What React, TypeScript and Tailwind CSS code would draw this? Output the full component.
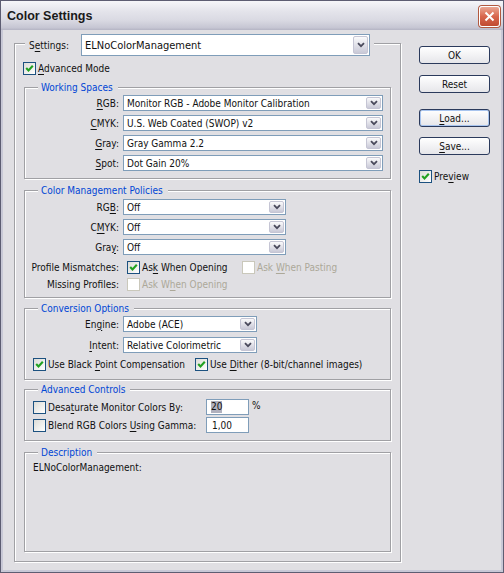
import React from 'react'

type Kids = { children?: React.ReactNode }

// underlined access key letter
function K({ children }: Kids) {
  return <span className="underline decoration-1 underline-offset-[2px]">{children}</span>
}

function Chevron() {
  return (
    <svg width="8" height="6" viewBox="0 0 8 6">
      <path d="M1 1.2 L4 4.2 L7 1.2" stroke="#4a4a5c" strokeWidth="1.8" fill="none" />
    </svg>
  )
}

function Select({ value, className }: { value: string; className: string }) {
  return (
    <div className={`flex border border-[#7f9db9] bg-white ${className}`}>
      <span className="flex flex-1 items-center truncate pl-[3px]">{value}</span>
      <span className="m-px flex w-[15px] items-center justify-center rounded-[2px] border border-[#c5c5d4] bg-gradient-to-b from-[#fafafb] to-[#c9c9d7]">
        <Chevron />
      </span>
    </div>
  )
}

function Check({ checked, disabled }: { checked?: boolean; disabled?: boolean }) {
  return (
    <span
      className={
        disabled
          ? 'flex h-[13px] w-[13px] shrink-0 border border-[#cac8bb] bg-white'
          : 'flex h-[13px] w-[13px] shrink-0 items-center justify-center border border-[#1c5180] bg-gradient-to-br from-[#dcdcd7] to-white'
      }
    >
      {checked && (
        <svg width="9" height="9" viewBox="0 0 9 9">
          <path d="M1.2 4 L3.5 6.4 L7.8 1.8" stroke="#21a121" strokeWidth="2.1" fill="none" />
        </svg>
      )}
    </span>
  )
}

function Group({ title, className, children }: Kids & { title: string; className: string }) {
  return (
    <div className={`flex flex-col border border-[#a0a0a4] shadow-[inset_1px_1px_0_#fff,1px_1px_0_#fff] ${className}`}>
      <div className="-mt-[7px] ml-[13px] self-start bg-[#e0dfe3] pl-[3px] pr-[5px] leading-[13px] text-[#0046d5]">
        {title}
      </div>
      {children}
    </div>
  )
}

function Row({ label, children, className = '' }: Kids & { label: React.ReactNode; className?: string }) {
  return (
    <div className={`flex h-[16px] items-center ${className}`}>
      <span className="w-[94px] text-right">{label}</span>
      {children}
    </div>
  )
}

function Button({ children, focused }: Kids & { focused?: boolean }) {
  return (
    <div
      className={
        focused
          ? 'flex h-[18px] w-[71px] items-center justify-center rounded-[3px] border border-[#2b3a5c] bg-gradient-to-b from-white to-[#e6e6ea] shadow-[inset_0_0_0_1px_#a8c4ee]'
          : 'flex h-[18px] w-[71px] items-center justify-center rounded-[3px] border border-[#2b3a5c] bg-gradient-to-b from-white to-[#e6e6ea]'
      }
    >
      {children}
    </div>
  )
}

export default function App() {
  return (
    <div className="h-[573px] w-[504px] overflow-hidden font-['DejaVu_Sans_Condensed','DejaVu_Sans',sans-serif] text-[10px] leading-[13px] text-[#111]">
      <div className="flex h-full flex-col border border-[#5d5d72] bg-[#e0dfe3]">
        {/* title bar */}
        <div className="flex h-[29px] shrink-0 items-center justify-between bg-[linear-gradient(to_bottom,#f6f6f9_0%,#e4e4eb_35%,#dadae3_65%,#c6c6d3_92%,#b4b4c4_100%)] pl-[6px] pr-[3px] pt-[2px]">
          <span className="font-['Liberation_Sans',sans-serif] text-[12.5px] font-bold text-[#1a1a1a]">Color Settings</span>
          <span className="flex h-[21px] w-[21px] items-center justify-center rounded-[3px] border border-white bg-gradient-to-b from-[#e9a592] via-[#d8664d] to-[#c04a30] shadow-[0_0_0_1px_#b2593f]">
            <svg width="11" height="11" viewBox="0 0 11 11">
              <path d="M1.5 1.5 L9.5 9.5 M9.5 1.5 L1.5 9.5" stroke="#fff" strokeWidth="2" />
            </svg>
          </span>
        </div>

        <div className="flex flex-1 border-x-2 border-b-2 border-[#c8c8d6] pl-[11px]">
          {/* main group */}
          <div className="mt-[13px] flex h-[519px] w-[387px] flex-col border border-[#a0a0a4] pb-[9px] shadow-[inset_1px_1px_0_#fff,1px_1px_0_#fff]">
            <div className="-mt-[10px] ml-[10px] flex items-center self-start bg-[#e0dfe3] px-[4px]">
              <span className="w-[52px]">
                S<K>e</K>ttings:
              </span>
              <Select value="ELNoColorManagement" className="h-[22px] w-[289px] text-[11px]" />
            </div>

            <div className="ml-[8px] mt-[6px] flex h-[13px] items-center gap-[2px]">
              <Check checked />
              <span>
                <K>A</K>dvanced Mode
              </span>
            </div>

            <Group title="Working Spaces" className="ml-[9px] mt-[12px] w-[367px] pb-[7px]">
              <div className="mt-[1px] flex flex-col gap-[4px]">
                <Row label={<><K>R</K>GB:</>}>
                  <Select value="Monitor RGB - Adobe Monitor Calibration" className="ml-[4px] h-[16px] w-[260px]" />
                </Row>
                <Row label={<><K>C</K>MYK:</>}>
                  <Select value="U.S. Web Coated (SWOP) v2" className="ml-[4px] h-[16px] w-[260px]" />
                </Row>
                <Row label={<><K>G</K>ray:</>}>
                  <Select value="Gray Gamma 2.2" className="ml-[4px] h-[16px] w-[260px]" />
                </Row>
                <Row label={<><K>S</K>pot:</>}>
                  <Select value="Dot Gain 20%" className="ml-[4px] h-[16px] w-[260px]" />
                </Row>
              </div>
            </Group>

            <Group title="Color Management Policies" className="ml-[9px] mt-[11px] w-[367px] pb-[6px]">
              <div className="mt-[2px] flex flex-col gap-[4px]">
                <Row label={<>RG<K>B</K>:</>}>
                  <Select value="Off" className="ml-[4px] h-[16px] w-[163px]" />
                </Row>
                <Row label={<>C<K>M</K>YK:</>}>
                  <Select value="Off" className="ml-[4px] h-[16px] w-[163px]" />
                </Row>
                <Row label={<>Gra<K>y</K>:</>}>
                  <Select value="Off" className="ml-[4px] h-[16px] w-[163px]" />
                </Row>
              </div>
              <div className="mt-[6px] flex h-[13px] items-center">
                <span className="w-[94px] text-right">Profile Mismatches:</span>
                <div className="ml-[8px] flex w-[115px] items-center gap-[2px]">
                  <Check checked />
                  <span>
                    As<K>k</K> When Opening
                  </span>
                </div>
                <div className="flex items-center gap-[2px] text-[#aca899]">
                  <Check disabled />
                  <span>
                    Ask <K>W</K>hen Pasting
                  </span>
                </div>
              </div>
              <div className="mt-[4px] flex h-[13px] items-center">
                <span className="w-[94px] text-right">Missing Profiles:</span>
                <div className="ml-[8px] flex items-center gap-[2px] text-[#aca899]">
                  <Check disabled />
                  <span>
                    Ask W<K>h</K>en Opening
                  </span>
                </div>
              </div>
            </Group>

            <Group title="Conversion Options" className="ml-[9px] mt-[10px] w-[367px] pb-[8px]">
              <div className="mt-[1px] flex flex-col gap-[5px]">
                <Row label={<>En<K>g</K>ine:</>}>
                  <Select value="Adobe (ACE)" className="ml-[4px] h-[16px] w-[134px]" />
                </Row>
                <Row label={<><K>I</K>ntent:</>}>
                  <Select value="Relative Colorimetric" className="ml-[4px] h-[16px] w-[134px]" />
                </Row>
              </div>
              <div className="mt-[5px] flex h-[13px] items-center pl-[8px]">
                <div className="flex w-[162px] items-center gap-[2px]">
                  <Check checked />
                  <span>
                    Use Black <K>P</K>oint Compensation
                  </span>
                </div>
                <div className="flex items-center gap-[2px]">
                  <Check checked />
                  <span>
                    Use <K>D</K>ither (8-bit/channel images)
                  </span>
                </div>
              </div>
            </Group>

            <Group title="Advanced Controls" className="ml-[9px] mt-[9px] w-[367px] pb-[7px]">
              <div className="mt-[3px] flex flex-col gap-[2px] pl-[8px]">
                <div className="flex h-[16px] items-center">
                  <div className="flex w-[173px] items-center gap-[2px]">
                    <Check />
                    <span>
                      Desa<K>t</K>urate Monitor Colors By:
                    </span>
                  </div>
                  <div className="flex h-[16px] w-[43px] items-center border border-[#7f9db9] bg-white pl-[4px]">
                    <span className="bg-[#b0b0bd] leading-[12px]">20</span>
                  </div>
                  <span className="ml-[3px] -mt-[4px]">%</span>
                </div>
                <div className="flex h-[16px] items-center">
                  <div className="flex w-[173px] items-center gap-[2px]">
                    <Check />
                    <span>
                      Blend RGB Colors <K>U</K>sing Gamma:
                    </span>
                  </div>
                  <div className="flex h-[16px] w-[43px] items-center border border-[#7f9db9] bg-white pl-[5px]">
                    1,00
                  </div>
                </div>
              </div>
            </Group>

            <Group title="Description" className="ml-[9px] mt-[11px] w-[367px] flex-1">
              <div className="mt-[2px] pl-[8px]">ELNoColorManagement:</div>
            </Group>
          </div>

          {/* buttons */}
          <div className="ml-[18px] mt-[16px] flex w-[71px] flex-col">
            <Button>OK</Button>
            <div className="mt-[11px]">
              <Button>Reset</Button>
            </div>
            <div className="mt-[16px]">
              <Button focused>
                <K>L</K>oad...
              </Button>
            </div>
            <div className="mt-[10px]">
              <Button>
                <K>S</K>ave...
              </Button>
            </div>
            <div className="mt-[15px] flex h-[13px] items-center gap-[2px]">
              <Check checked />
              <span>
                Pre<K>v</K>iew
              </span>
            </div>
          </div>
        </div>
      </div>
    </div>
  )
}
